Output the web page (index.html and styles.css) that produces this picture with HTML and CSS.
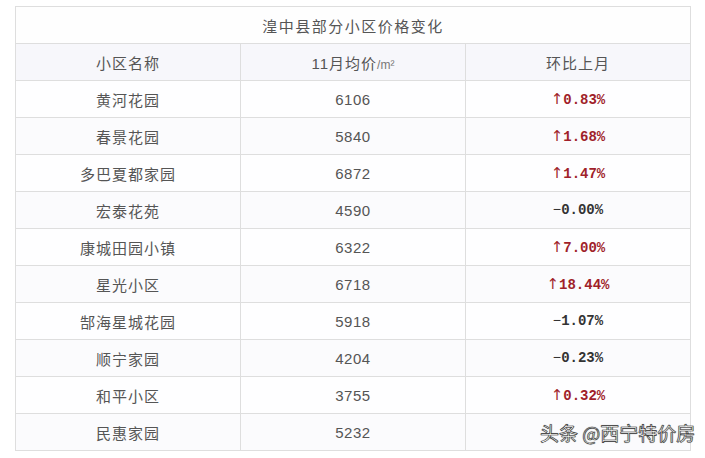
FILE: index.html
```
<!DOCTYPE html>
<html lang="zh">
<head>
<meta charset="utf-8">
<link rel="stylesheet" href="styles.css">
</head>
<body>
<div class="wrap">
<table class="price">
  <tr class="title"><td colspan="3">湟中县部分小区价格变化</td></tr>
  <tr class="head"><td>小区名称</td><td>11月均价<span class="unit">/m²</span></td><td>环比上月</td></tr>
  <tr><td>黄河花园</td><td class="num">6106</td><td class="pct up"><span class="arr">↑</span>0.83%</td></tr>
  <tr><td>春景花园</td><td class="num">5840</td><td class="pct up"><span class="arr">↑</span>1.68%</td></tr>
  <tr><td>多巴夏都家园</td><td class="num">6872</td><td class="pct up"><span class="arr">↑</span>1.47%</td></tr>
  <tr><td>宏泰花苑</td><td class="num">4590</td><td class="pct"><span class="dash">−</span>0.00%</td></tr>
  <tr><td>康城田园小镇</td><td class="num">6322</td><td class="pct up"><span class="arr">↑</span>7.00%</td></tr>
  <tr><td>星光小区</td><td class="num">6718</td><td class="pct up"><span class="arr">↑</span>18.44%</td></tr>
  <tr><td>郜海星城花园</td><td class="num">5918</td><td class="pct"><span class="dash">−</span>1.07%</td></tr>
  <tr><td>顺宁家园</td><td class="num">4204</td><td class="pct"><span class="dash">−</span>0.23%</td></tr>
  <tr><td>和平小区</td><td class="num">3755</td><td class="pct up"><span class="arr">↑</span>0.32%</td></tr>
  <tr><td>民惠家园</td><td class="num">5232</td><td></td></tr>
</table>
<div class="mark">头条 @西宁特价房</div>
</div>
</body>
</html>
```
FILE: styles.css
```
html, body { margin: 0; padding: 0; background: #fff; }
.wrap {
  position: relative;
  height: 458px;
  box-sizing: border-box;
  padding: 6px 0 0 15px;
  font-family: "Liberation Sans", "Noto Sans CJK SC", sans-serif;
  color: #555;
}
.price {
  border-collapse: collapse;
  width: 676px;
  table-layout: fixed;
}
.price td {
  border: 1px solid #dedede;
  height: 37px;
  padding: 0;
  text-align: center;
  font-size: 15px;
  letter-spacing: 1px;
  box-sizing: border-box;
}
.price tr td:nth-child(1) { width: 224px; }
.price tr td:nth-child(2) { width: 225px; }
.title td { background: #fefefe; letter-spacing: 1.5px; }
.head td { background: #f7f7fb; }
.price tr:nth-child(n+3) td { background: #fefeff; }
.price tr:nth-child(2n+4) td { background: #fbfbfd; }
.price td.num { letter-spacing: 0.5px; }
.unit { font-size: 12px; letter-spacing: 0; color: #777; }
.pct {
  font-family: "Liberation Mono", "DejaVu Sans Mono", monospace;
  font-weight: bold;
  color: #333;
}
.price td.pct { font-size: 14px; letter-spacing: 0; }
.pct.up { color: #a01f2a; }
.arr { font-weight: normal; font-family: "DejaVu Sans", sans-serif; font-size: 15px; }
.dash { font-weight: normal; }
.mark {
  position: absolute;
  left: 540px;
  top: 422px;
  line-height: 22px;
  font-family: "Noto Sans CJK SC", sans-serif;
  font-size: 19px;
  color: #fff;
  letter-spacing: 0;
  -webkit-text-stroke: 0.6px #333;
  text-shadow: 0 0 1px #333;
}
```
